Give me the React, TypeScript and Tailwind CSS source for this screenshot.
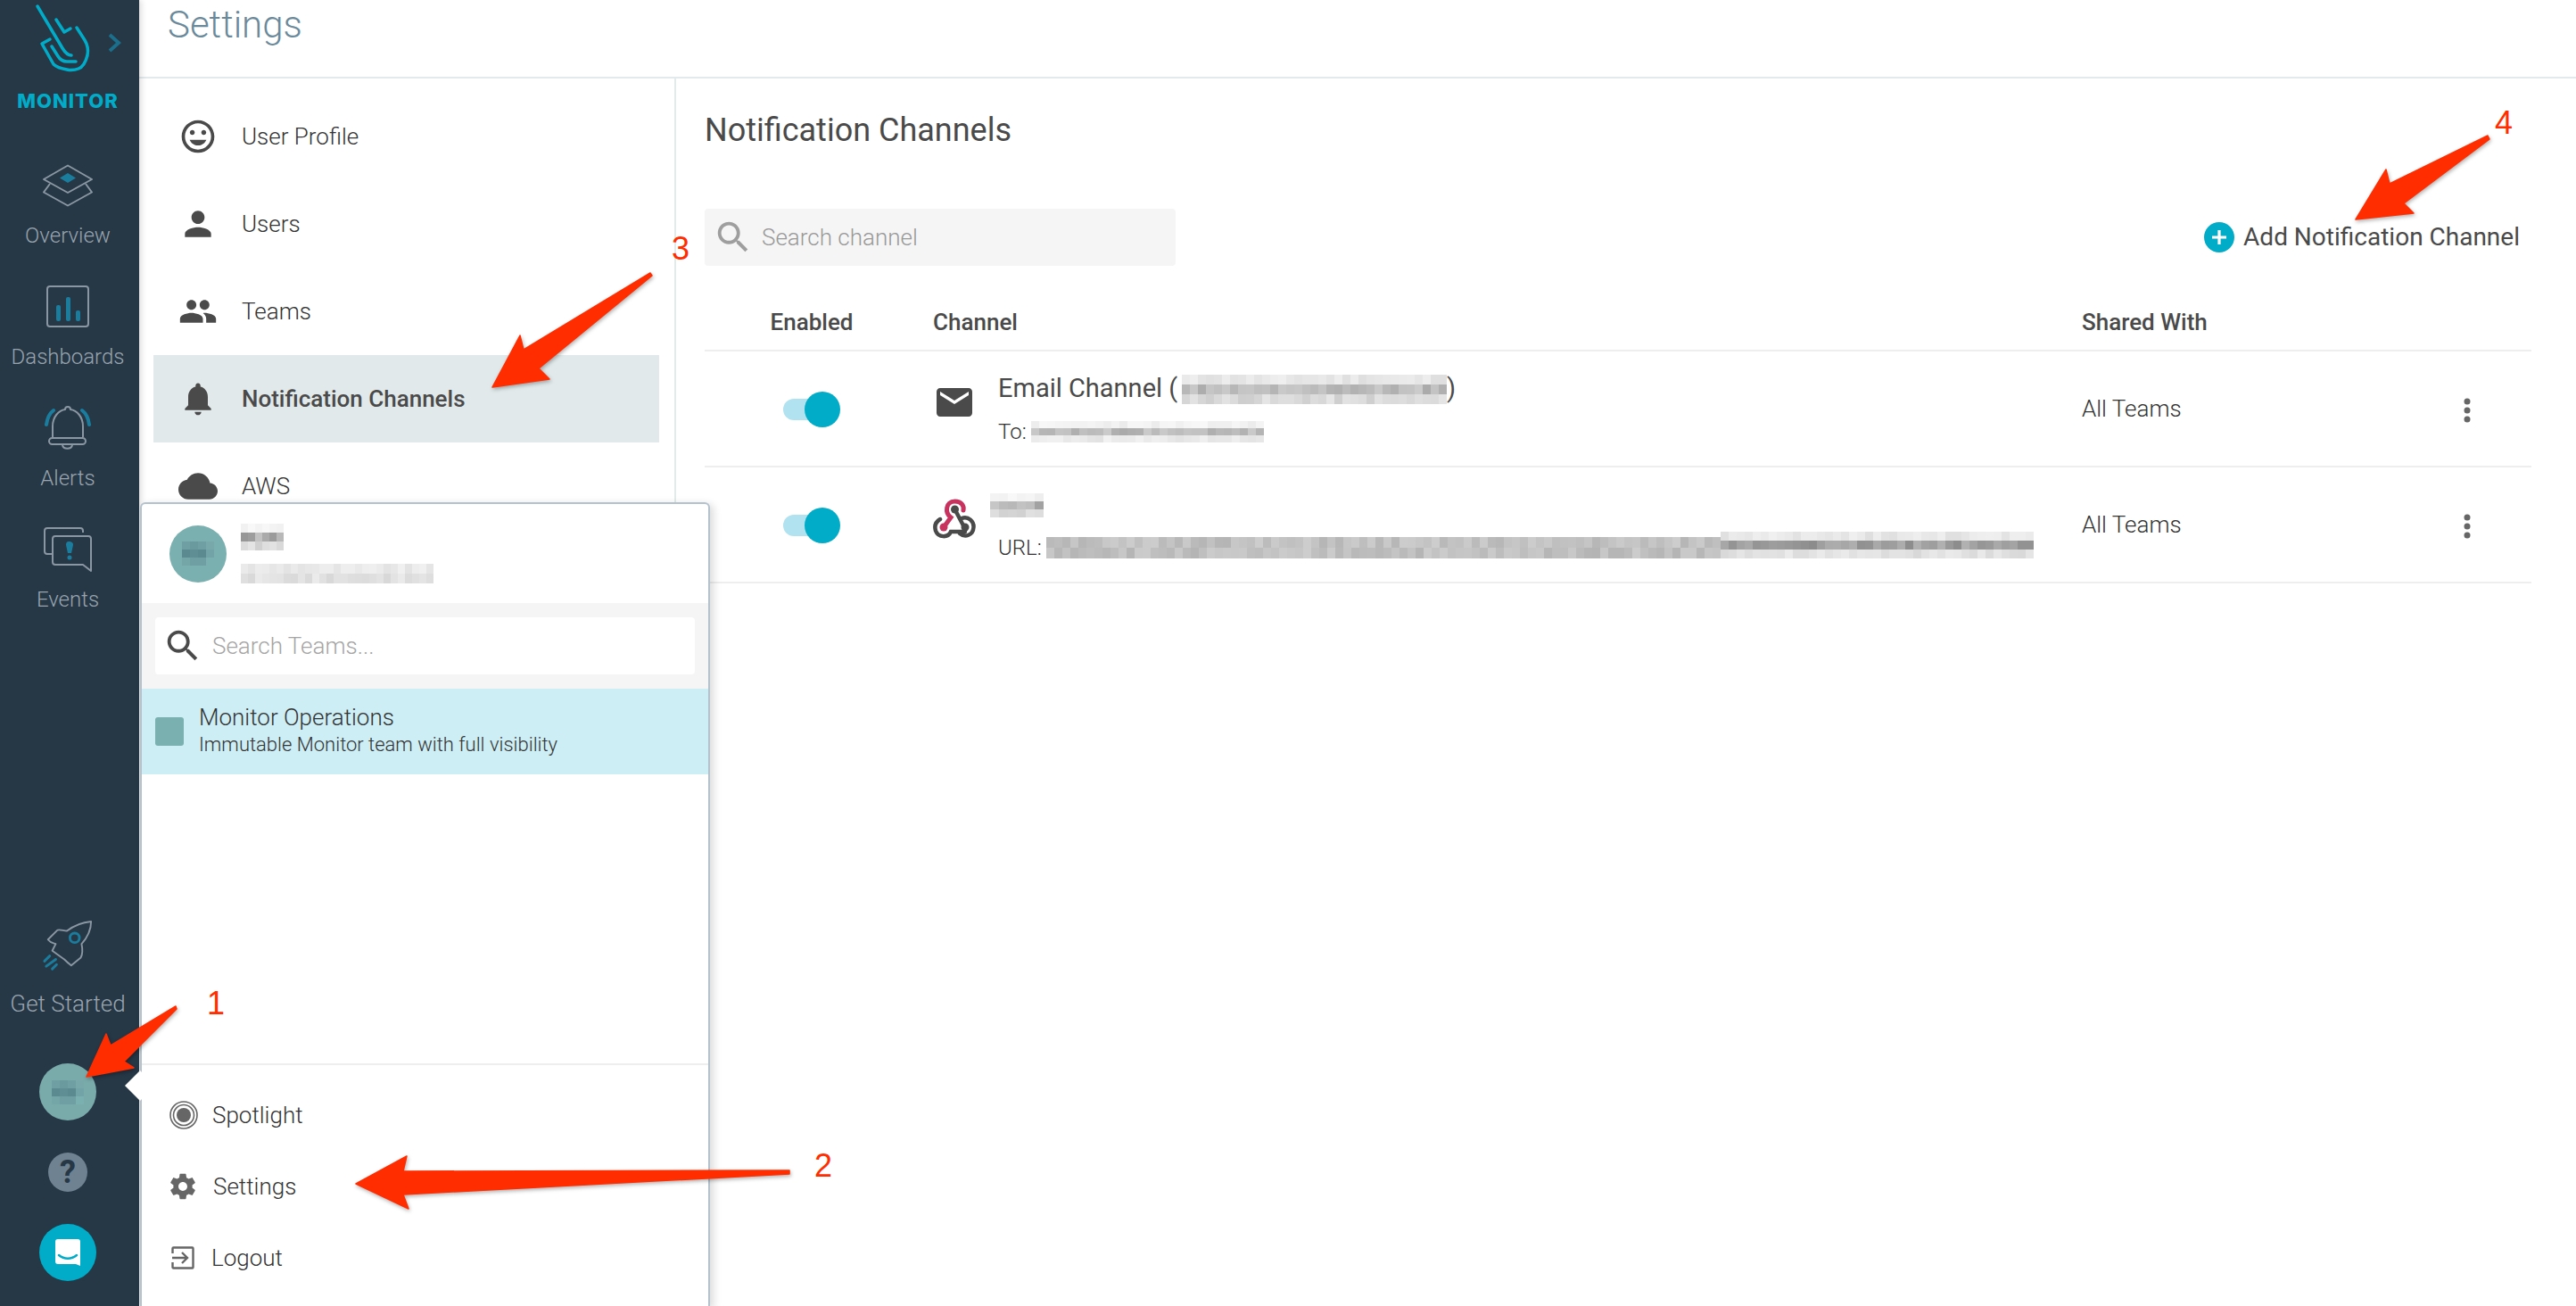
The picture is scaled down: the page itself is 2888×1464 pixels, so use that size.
import React from "react";

const P = {
  mood: "M11.99 2C6.47 2 2 6.48 2 12s4.47 10 9.99 10C17.52 22 22 17.52 22 12S17.52 2 11.99 2zM12 20c-4.42 0-8-3.58-8-8s3.58-8 8-8 8 3.58 8 8-3.58 8-8 8zm3.5-9c.83 0 1.5-.67 1.5-1.5S16.33 8 15.5 8 14 8.67 14 9.5s.67 1.5 1.5 1.5zm-7 0c.83 0 1.5-.67 1.5-1.5S9.33 8 8.5 8 7 8.67 7 9.5 7.67 11 8.5 11zm3.5 6.5c2.33 0 4.31-1.46 5.11-3.5H6.89c.8 2.04 2.78 3.5 5.11 3.5z",
  person: "M12 12c2.21 0 4-1.79 4-4s-1.79-4-4-4-4 1.79-4 4 1.79 4 4 4zm0 2c-2.67 0-8 1.34-8 4v2h16v-2c0-2.66-5.33-4-8-4z",
  people: "M16 11c1.66 0 2.99-1.34 2.99-3S17.66 5 16 5c-1.66 0-3 1.34-3 3s1.34 3 3 3zm-8 0c1.66 0 2.99-1.34 2.99-3S9.66 5 8 5C6.34 5 5 6.34 5 8s1.34 3 3 3zm0 2c-2.33 0-7 1.17-7 3.5V19h14v-2.5c0-2.33-4.67-3.5-7-3.5zm8 0c-.29 0-.62.02-.97.05 1.16.84 1.97 1.97 1.97 3.45V19h6v-2.5c0-2.33-4.67-3.5-7-3.5z",
  bell: "M12 22c1.1 0 2-.9 2-2h-4c0 1.1.89 2 2 2zm6-6v-5c0-3.07-1.64-5.64-4.5-6.32V4c0-.83-.67-1.5-1.5-1.5s-1.5.67-1.5 1.5v.68C7.63 5.36 6 7.92 6 11v5l-2 2v1h16v-1l-2-2z",
  cloud: "M19.35 10.04C18.67 6.59 15.64 4 12 4 9.11 4 6.6 5.64 5.35 8.04 2.34 8.36 0 10.91 0 14c0 3.31 2.69 6 6 6h13c2.76 0 5-2.24 5-5 0-2.64-2.05-4.78-4.65-4.96z",
  search: "M15.5 14h-.79l-.28-.27C15.41 12.59 16 11.11 16 9.5 16 5.91 13.09 3 9.5 3S3 5.91 3 9.5 5.91 16 9.5 16c1.61 0 3.09-.59 4.23-1.57l.27.28v.79l5 4.99L20.49 19l-4.99-5zm-6 0C7.01 14 5 11.99 5 9.5S7.01 5 9.5 5 14 7.01 14 9.5 11.99 14 9.5 14z",
  mail: "M20 4H4c-1.1 0-1.99.9-1.99 2L2 18c0 1.1.9 2 2 2h16c1.1 0 2-.9 2-2V6c0-1.1-.9-2-2-2zm0 4l-8 5-8-5V6l8 5 8-5v2z",
  gear: "M19.43 12.98c.04-.32.07-.64.07-.98s-.03-.66-.07-.98l2.11-1.65c.19-.15.24-.42.12-.64l-2-3.46c-.12-.22-.39-.3-.61-.22l-2.49 1c-.52-.4-1.08-.73-1.69-.98l-.38-2.65C14.46 2.18 14.25 2 14 2h-4c-.25 0-.46.18-.49.42l-.38 2.65c-.61.25-1.17.59-1.69.98l-2.49-1c-.23-.09-.49 0-.61.22l-2 3.46c-.13.22-.07.49.12.64l2.11 1.65c-.04.32-.07.65-.07.98s.03.66.07.98l-2.11 1.65c-.19.15-.24.42-.12.64l2 3.46c.12.22.39.3.61.22l2.49-1c.52.4 1.08.73 1.69.98l.38 2.65c.03.24.24.42.49.42h4c.25 0 .46-.18.49-.42l.38-2.65c.61-.25 1.17-.59 1.69-.98l2.49 1c.23.09.49 0 .61-.22l2-3.46c.12-.22.07-.49-.12-.64l-2.11-1.65zM12 15.5c-1.93 0-3.5-1.57-3.5-3.5s1.57-3.5 3.5-3.5 3.5 1.57 3.5 3.5-1.57 3.5-3.5 3.5z",
};

function Icon({ d, size, color = "#4a4a4a" }: { d: string; size: number; color?: string }) {
  return (
    <svg width={size} height={size} viewBox="0 0 24 24" fill={color} className="block shrink-0">
      <path d={d} />
    </svg>
  );
}

// Deterministic pixelated "redaction" block
function Mosaic({
  cols,
  seed,
  bands,
  cw = 9,
  ch = 10,
  className = "",
}: {
  cols: number;
  seed: number;
  bands: [number, number][];
  cw?: number;
  ch?: number;
  className?: string;
}) {
  let s = seed;
  const rnd = () => {
    s = (s * 9301 + 49297) % 233280;
    return s / 233280;
  };
  const cells: React.ReactNode[] = [];
  bands.forEach((b, r) => {
    for (let c = 0; c < cols; c++) {
      const v = Math.round(b[0] + (b[1] - b[0]) * rnd());
      cells.push(<div key={r + "-" + c} style={{ background: `rgb(${v},${v},${v})` }} />);
    }
  });
  return (
    <div
      className={"grid shrink-0 blur-[0.6px] " + className}
      style={{
        gridTemplateColumns: `repeat(${cols}, ${cw}px)`,
        gridTemplateRows: `repeat(${bands.length}, ${ch}px)`,
      }}
    >
      {cells}
    </div>
  );
}

function AvatarBlur() {
  const shades = [
    "#6f9fa2", "#6a9a9e", "#6f9fa2", "#78a8aa",
    "#5b8a90", "#5f8f94", "#5b8a90", "#72a3a6",
    "#74a5a7", "#6f9fa2", "#6f9fa2", "#7ab0b0",
  ];
  return (
    <div className="grid grid-cols-[repeat(4,9px)] grid-rows-[repeat(3,9px)] blur-[0.5px]">
      {shades.map((c, i) => (
        <div key={i} style={{ background: c }} />
      ))}
    </div>
  );
}

function NavIcon({ name }: { name: string }) {
  const g = "#8a97a3";
  const t = "#1b7d9e";
  if (name === "Overview")
    return (
      <svg width="58" height="48" viewBox="0 0 58 48" fill="none" stroke={g} strokeWidth="2" strokeLinejoin="round">
        <path d="M29 1.5 56 17 29 32 2 17Z" />
        <path d="M9 22 2 31.5 29 46.5 56 31.5 49 22" />
        <path d="M29 10 38 15.5 29 21 20 15.5Z" fill={t} stroke="none" />
      </svg>
    );
  if (name === "Dashboards")
    return (
      <svg width="48" height="48" viewBox="0 0 48 48" fill="none">
        <rect x="1" y="1" width="46" height="45" rx="3" stroke={g} strokeWidth="2" />
        <rect x="11" y="22" width="5" height="18" rx="2" fill={t} />
        <rect x="22" y="13" width="5" height="27" rx="2" fill={t} />
        <rect x="33" y="28" width="5" height="12" rx="2" fill={t} />
      </svg>
    );
  if (name === "Alerts")
    return (
      <svg width="52" height="52" viewBox="0 0 52 52" fill="none" stroke={g} strokeWidth="2" strokeLinejoin="round">
        <path d="M9 36V24C9 13 16 6 23 5C23 1 29 1 29 5C36 6 43 13 43 24V36" />
        <rect x="5" y="37" width="41" height="7" rx="3.5" />
        <path d="M20 45C21 50 30 50 31 45" />
        <path d="M2 22C3 14 6 9 10 6" stroke={t} strokeWidth="4" strokeLinecap="round" />
        <path d="M50 22C49 14 46 9 42 6" stroke={t} strokeWidth="4" strokeLinecap="round" />
      </svg>
    );
  if (name === "Events")
    return (
      <svg width="54" height="50" viewBox="0 0 54 50" fill="none" stroke={g} strokeWidth="2" strokeLinejoin="round">
        <path d="M44 6V4C44 2 43 1 41 1H4C2 1 1 2 1 4V27C1 29 2 30 4 30H10" />
        <path d="M13 10H50C52 10 53 11 53 13V38C53 42 53 49 53 49L44 42H13C11 42 10 41 10 39V13C10 11 11 10 13 10Z" />
        <path d="M28 16C31 16 33 17 33 20L31 29H27L25 20C25 17 26 16 28 16Z" fill={t} stroke="none" />
        <circle cx="29" cy="34" r="2.5" fill={t} stroke="none" />
      </svg>
    );
  return (
    <svg width="58" height="58" viewBox="46 30 60 60" fill="none" stroke={g} strokeWidth="2" strokeLinejoin="round">
      <path d="M103 32C92 33 84 36 75 43C71 43 68 41 64 42L53 53C56 57 59 57 62 58L58 66L72 76C74 78 76 80 80 83L91 74C94 69 93 63 92 58C100 49 103 41 103 32Z" />
      <circle cx="84" cy="51" r="5.5" stroke={t} strokeWidth="3" />
      <path d="M49 78 55 72M51 84 62 76M58 87 63 82" stroke={t} strokeWidth="3" strokeLinecap="round" />
    </svg>
  );
}

function SideItem({ label }: { label: string }) {
  return (
    <div className="flex h-[136px] flex-col items-center">
      <div className="flex h-[74px] items-center justify-center">
        <NavIcon name={label} />
      </div>
      <div className="text-[24px] leading-[38px] font-light text-[#98a4ae]">{label}</div>
    </div>
  );
}

function Sidebar() {
  return (
    <aside className="z-10 flex h-full w-[156px] shrink-0 flex-col items-stretch bg-[#263746] pr-[4px] shadow-[3px_0_6px_rgba(0,0,0,0.12)]">
      <svg width="152" height="96" viewBox="0 0 152 96" fill="none" className="block shrink-0" stroke="#00acc8" strokeWidth="3.5" strokeLinecap="round" strokeLinejoin="round">
        <path d="M42 7 70 54C73 59 76 62 80 62" />
        <path d="M63 22 72 36 79 32" />
        <path d="M86 31 95 45C98 50 99 57 98 62C96 70 93 75 88 77C83 79 79 79 75 78C69 77 64 76 60 72L47 49 56 44" />
        <path d="M58 52 65 63C68 68 71 69 75 69H85" />
        <path d="M123 39 133 48 123 57" stroke="#1b6f8a" strokeWidth="4" strokeLinecap="butt" strokeLinejoin="miter" />
      </svg>
      <div className="h-[36px] whitespace-nowrap text-center text-[22px] leading-[34px] font-extrabold tracking-[1px] text-[#00acc8] [font-family:Inter,sans-serif]">
        MONITOR
      </div>
      <div className="h-[39px]" />
      <SideItem label="Overview" />
      <SideItem label="Dashboards" />
      <SideItem label="Alerts" />
      <SideItem label="Events" />
      <div className="mt-auto flex flex-col items-center pb-[28px]">
        <NavIcon name="Get Started" />
        <div className="mt-[17px] whitespace-nowrap text-[26px] leading-[38px] font-light text-[#98a4ae]">Get Started</div>
        <div className="mt-[48px] flex h-[64px] w-[64px] items-center justify-center rounded-full bg-[#7aabab]">
          <AvatarBlur />
        </div>
        <div className="mt-[36px] flex h-[44px] w-[44px] items-center justify-center rounded-full bg-[#6f8292] text-[36px] leading-none font-bold text-[#263746]">
          ?
        </div>
        <div className="mt-[36px] flex h-[64px] w-[64px] items-center justify-center rounded-full bg-[#00acc8]">
          <svg width="30" height="32" viewBox="0 0 30 32">
            <path d="M4 1H26C28 1 29 2 29 4V31L24 29H4C2 29 1 28 1 26V4C1 2 2 1 4 1Z" fill="#fff" />
            <path d="M5 19C11 24 19 24 25 19" fill="none" stroke="#00acc8" strokeWidth="2.5" strokeLinecap="round" />
          </svg>
        </div>
      </div>
    </aside>
  );
}

function SettingsNav() {
  const items = [
    { d: P.mood, label: "User Profile", size: 44 },
    { d: P.person, label: "Users", size: 44 },
    { d: P.people, label: "Teams", size: 44 },
    { d: P.bell, label: "Notification Channels", size: 44, active: true },
    { d: P.cloud, label: "AWS", size: 44 },
  ];
  return (
    <nav className="w-[602px] shrink-0 border-r-2 border-[#e3eaea] pt-[16px] pr-[17px] pl-[16px]">
      {items.map((it) => (
        <div key={it.label} className={"flex h-[98px] items-center " + (it.active ? "bg-[#e1e9ea]" : "")}>
          <div className="flex w-[99px] justify-center">
            <Icon d={it.d} size={it.size} />
          </div>
          <span className={"text-[26px] " + (it.active ? "font-medium text-[#4a4a4a]" : "font-light text-[#333333]")}>{it.label}</span>
        </div>
      ))}
    </nav>
  );
}

function Toggle() {
  return (
    <div className="relative mx-auto mt-[2px] h-[40px] w-[64px]">
      <div className="absolute top-[8px] left-0 h-[24px] w-[50px] rounded-full bg-[#b0e3ef]" />
      <div className="absolute top-0 right-0 h-[40px] w-[40px] rounded-full bg-[#00acc8]" />
    </div>
  );
}

function Kebab() {
  return (
    <svg width="10" height="30" viewBox="0 0 10 30" fill="#666" className="mt-[4px] block">
      <circle cx="5" cy="5" r="3.5" />
      <circle cx="5" cy="15" r="3.5" />
      <circle cx="5" cy="25" r="3.5" />
    </svg>
  );
}

function Webhook() {
  return (
    <svg width="48" height="46" viewBox="0 0 48 46" fill="none" strokeLinecap="round" className="block">
      <path d="M12 32 20 21C13 16 14 3 24.5 3C32 3 35 8 34 13" stroke="#c8325f" strokeWidth="5" />
      <circle cx="12" cy="32" r="4.5" fill="#c8325f" />
      <path d="M24.5 12 35 32" stroke="#4a4a4a" strokeWidth="4.5" />
      <circle cx="24.5" cy="12" r="4.5" fill="#4a4a4a" />
      <circle cx="36" cy="32" r="4.5" fill="#4a4a4a" />
      <path d="M32 22C40 19 46 26 45.5 32C45 41 36 44 30 39" stroke="#4a4a4a" strokeWidth="4.5" />
      <path d="M8 23C3 26 1.5 31 3 36C6 44 17 44 20 37H36" stroke="#4a4a4a" strokeWidth="4.5" />
    </svg>
  );
}

function Rows() {
  const faint: [number, number] = [222, 240];
  const mid: [number, number] = [170, 205];
  const low: [number, number] = [205, 230];
  return (
    <>
      <div className="flex h-[130px] items-center border-b-2 border-[#eeeeee]">
        <div className="w-[240px] shrink-0">
          <Toggle />
        </div>
        <div className="flex w-[1304px] shrink-0 items-center pl-[16px]">
          <div className="flex w-[73px] shrink-0 -translate-y-[7px]">
            <Icon d={P.mail} size={48} />
          </div>
          <div className="flex flex-col">
            <div className="flex h-[44px] items-center whitespace-nowrap text-[29px] text-[#4a4a4a]">
              <span className="w-[206px]">Email Channel (</span>
              <Mosaic cols={33} seed={11} bands={[faint, mid, low]} cw={9} ch={11} />
              <span>)</span>
            </div>
            <div className="mt-[8px] flex h-[36px] items-center text-[24px] font-light text-[#333333]">
              <span className="w-[37px]">To:</span>
              <Mosaic cols={29} seed={23} bands={[[235, 248], mid, [225, 242]]} cw={9} ch={8} />
            </div>
          </div>
        </div>
        <span className="text-[26px] font-light text-[#333333]">All Teams</span>
        <div className="ml-auto pr-[67px]">
          <Kebab />
        </div>
      </div>
      <div className="flex h-[130px] items-center border-b-2 border-[#eeeeee]">
        <div className="w-[240px] shrink-0">
          <Toggle />
        </div>
        <div className="flex w-[1304px] shrink-0 items-center pl-[16px]">
          <div className="flex w-[73px] shrink-0 -translate-y-[6px]">
            <Webhook />
          </div>
          <div className="flex flex-col">
            <div className="-ml-[9px] flex h-[44px] items-center">
              <Mosaic cols={6} seed={37} bands={[[232, 248], [150, 200], [200, 225]]} cw={10} ch={9} />
            </div>
            <div className="mt-[8px] flex h-[36px] items-center text-[24px] font-light text-[#333333]">
              <span className="w-[54px]">URL:</span>
              <Mosaic cols={84} seed={51} bands={[[180, 205], [180, 205]]} cw={9} ch={12} />
              <Mosaic cols={39} seed={73} bands={[[222, 240], [140, 180], [215, 235]]} cw={9} ch={10} className="-mt-[6px]" />
            </div>
          </div>
        </div>
        <span className="text-[26px] font-light text-[#333333]">All Teams</span>
        <div className="ml-auto pr-[67px]">
          <Kebab />
        </div>
      </div>
    </>
  );
}

function Content() {
  return (
    <section className="min-w-0 flex-1 pt-[36px] pr-[50px] pl-[32px]">
      <h1 className="h-[44px] text-[36px] leading-[44px] font-normal text-[#4a4a4a]">Notification Channels</h1>
      <div className="mt-[66px] flex h-[64px] items-center justify-between">
        <div className="flex h-[64px] w-[528px] items-center rounded-[4px] bg-[#f5f5f5] pl-[9px]">
          <Icon d={P.search} size={46} color="#9e9e9e" />
          <span className="ml-[9px] text-[26px] font-light text-[#999999]">Search channel</span>
        </div>
        <div className="flex items-center pr-[13px]">
          <div className="flex h-[34px] w-[34px] items-center justify-center rounded-full bg-[#00acc8]">
            <svg width="18" height="18" viewBox="0 0 18 18" stroke="#fff" strokeWidth="3.2">
              <path d="M9 1V17M1 9H17" />
            </svg>
          </div>
          <span className="ml-[10px] text-[28px] text-[#4a4a4a]">Add Notification Channel</span>
        </div>
      </div>
      <div className="flex h-[96px] items-start border-b-2 border-[#eeeeee] pt-[47px] text-[26px] leading-[32px] font-medium text-[#4a4a4a]">
        <div className="w-[240px] shrink-0 text-center">Enabled</div>
        <div className="w-[1304px] shrink-0 pl-[16px]">Channel</div>
        <div>Shared With</div>
      </div>
      <Rows />
    </section>
  );
}

function Popup() {
  return (
    <div className="absolute top-[563px] left-[157px] z-20 flex h-[903px] w-[639px] flex-col rounded-t-[6px] border-x-2 border-t-2 border-[#b3c2cd] bg-white shadow-[4px_2px_10px_rgba(0,0,0,0.14)]">
      <div className="absolute top-[640px] -left-[14px] h-[24px] w-[24px] rotate-45 bg-white" />
      <div className="flex h-[111px] shrink-0 items-center pl-[31px]">
        <div className="flex h-[64px] w-[64px] items-center justify-center rounded-full bg-[#7ab0b0]">
          <AvatarBlur />
        </div>
        <div className="ml-[16px] flex flex-col gap-[15px]">
          <Mosaic cols={6} seed={5} bands={[[235, 250], [150, 195], [205, 232]]} cw={8} ch={10} />
          <Mosaic cols={27} seed={9} bands={[[225, 240], [215, 235]]} cw={8} ch={11} />
        </div>
      </div>
      <div className="flex h-[96px] shrink-0 items-center bg-[#f5f5f5] px-[15px]">
        <div className="flex h-[64px] w-full items-center rounded-[4px] bg-white pl-[8px]">
          <Icon d={P.search} size={46} />
          <span className="ml-[10px] text-[26px] font-light text-[#a5a5a5]">Search Teams...</span>
        </div>
      </div>
      <div className="flex h-[96px] shrink-0 items-center bg-[#cdeef5] pl-[15px]">
        <div className="h-[32px] w-[32px] rounded-[3px] bg-[#7ab0b0]" />
        <div className="ml-[17px] flex -translate-y-[1px] flex-col">
          <span className="text-[26px] leading-[32px] font-light text-[#333333]">Monitor Operations</span>
          <span className="text-[22px] leading-[30px] font-light text-[#333333]">Immutable Monitor team with full visibility</span>
        </div>
      </div>
      <div className="mt-auto h-[2px] shrink-0 bg-[#eeeeee]" />
      <div className="flex flex-col pt-[16px] pb-[16px] text-[26px] font-light text-[#333333]">
        <div className="flex h-[80px] items-center pl-[31px]">
          <svg width="32" height="32" viewBox="0 0 32 32" fill="none" stroke="#666">
            <circle cx="16" cy="16" r="15" strokeWidth="1.6" />
            <circle cx="16" cy="16" r="11.5" strokeWidth="1.6" />
            <circle cx="16" cy="16" r="8" fill="#666" stroke="none" />
          </svg>
          <span className="ml-[16px]">Spotlight</span>
        </div>
        <div className="flex h-[80px] items-center pl-[29px]">
          <Icon d={P.gear} size={34} color="#666" />
          <span className="ml-[17px]">Settings</span>
        </div>
        <div className="flex h-[80px] items-center pl-[33px]">
          <svg width="26" height="26" viewBox="0 0 26 26" fill="none" stroke="#666" strokeWidth="2.4">
            <path d="M1.5 8V2.5C1.5 2 2 1.5 2.5 1.5H23.5C24 1.5 24.5 2 24.5 2.5V23.5C24.5 24 24 24.5 23.5 24.5H2.5C2 24.5 1.5 24 1.5 23.5V18" />
            <path d="M1 13H17M12 7 18 13 12 19" />
          </svg>
          <span className="ml-[19px]">Logout</span>
        </div>
      </div>
    </div>
  );
}

function Annotations() {
  const arrows = [
    "197,1128 124,1172 119,1159 97,1207 150,1197 139,1190 198,1131",
    "885,1312 452,1313 456,1296 399,1327 458,1355 452,1339 885,1316",
    "729,306 587,392 583,376 552,434 616,425 604,413 731,309",
    "2789,152 2679,206 2675,190 2641,246 2706,239 2695,228 2791,156",
  ];
  const nums = [
    { t: "1", c: "left-[232px] top-[1105px]" },
    { t: "2", c: "left-[913px] top-[1287px]" },
    { t: "3", c: "left-[753px] top-[259px]" },
    { t: "4", c: "left-[2797px] top-[118px]" },
  ];
  return (
    <>
      <svg width="2888" height="1464" viewBox="0 0 2888 1464" className="pointer-events-none absolute top-0 left-0 z-30 drop-shadow-[1px_2px_2px_rgba(0,0,0,0.3)]">
        {arrows.map((p) => (
          <polygon key={p} points={p} fill="#ff2d00" stroke="#ff2d00" strokeWidth="1.5" strokeLinejoin="round" />
        ))}
      </svg>
      {nums.map((n) => (
        <div key={n.t} className={"absolute z-30 text-[36px] leading-[40px] font-medium text-[#ff2d00] [font-family:'Liberation_Sans',sans-serif] " + n.c}>
          {n.t}
        </div>
      ))}
    </>
  );
}

export default function App() {
  return (
    <div className="relative flex h-[1464px] w-[2888px] overflow-hidden bg-white [font-family:Roboto,sans-serif]">
      <Sidebar />
      <main className="flex min-w-0 flex-1 flex-col">
        <header className="h-[88px] shrink-0 border-b-2 border-[#e3eaec] pl-[32px] text-[42px] leading-[56px] font-light text-[#6a8a9c]">
          Settings
        </header>
        <div className="flex min-h-0 flex-1">
          <SettingsNav />
          <Content />
        </div>
      </main>
      <Popup />
      <Annotations />
    </div>
  );
}
